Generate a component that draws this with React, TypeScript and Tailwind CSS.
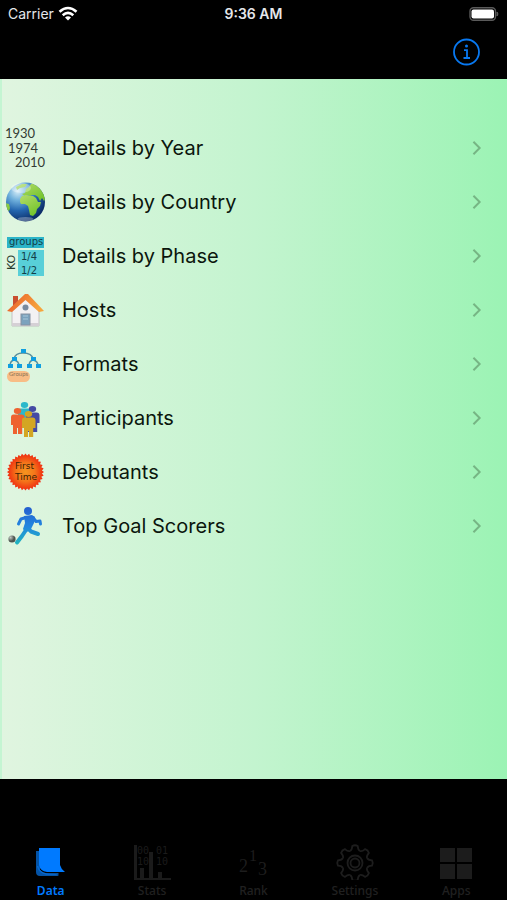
import type { ReactNode } from "react";

const YearIcon = () => (
  <svg viewBox="0 0 48 48" className="size-12" fontFamily="Lato, sans-serif" fontSize="13" fill="#333b33">
    <text x="5" y="14">1930</text>
    <text x="8" y="29">1974</text>
    <text x="15" y="43">2010</text>
  </svg>
);

const GlobeIcon = () => (
  <svg viewBox="0 0 48 48" className="size-12">
    <defs>
      <radialGradient id="sea" cx="0.3" cy="0.22" r="0.8">
        <stop offset="0" stopColor="#d8eef8" />
        <stop offset="0.3" stopColor="#6fb0dc" />
        <stop offset="0.62" stopColor="#2567b0" />
        <stop offset="1" stopColor="#0c2d68" />
      </radialGradient>
      <linearGradient id="land" x1="0" y1="0" x2="0.6" y2="1">
        <stop offset="0" stopColor="#b5dc6a" />
        <stop offset="1" stopColor="#73c42c" />
      </linearGradient>
      <clipPath id="ball">
        <circle cx="25.5" cy="24" r="19.5" />
      </clipPath>
    </defs>
    <circle cx="25.5" cy="24" r="19.5" fill="url(#sea)" />
    <g clipPath="url(#ball)" fill="url(#land)">
      <path d="M22 16l3-1 1-4 3-2 2-3 3-1 1-2 5 2 5 5 2 8-3 5-2-3-2 3-2-4-3-2-3 0-2 1-3-1-2 1z" />
      <path d="M20 21l2-3 4-1 4 1 3 0 3 2 2 4 3 0-1 4-3 3-1 4-3 3-3-1-1-5-1-4-3-2-4 0-1-2z" />
      <path d="M16 9l6-3 5 0-2 3-5 1-3 2zM5 25l4 1 1 4-1 3-4-2z" />
    </g>
    <ellipse cx="21" cy="10" rx="10" ry="5" fill="#fff" opacity="0.3" />
    <ellipse cx="25.5" cy="41" rx="8" ry="2" fill="#fff" opacity="0.3" />
  </svg>
);

const PhaseIcon = () => (
  <svg viewBox="0 0 48 48" className="size-12" fontFamily="'DejaVu Sans', sans-serif" fontSize="10" fill="#124048">
    <rect x="7" y="5" width="37" height="11" fill="#2cb4c8" />
    <rect x="18" y="18" width="26" height="26" fill="#58cfd8" />
    <text x="9" y="13">groups</text>
    <text x="21" y="28">1/4</text>
    <text x="21" y="42">1/2</text>
    <text transform="translate(15 38) rotate(-90)" fontSize="11" fill="#263a2c">KO</text>
  </svg>
);

const HouseIcon = () => (
  <svg viewBox="0 0 48 48" className="size-12">
    <defs>
      <linearGradient id="roof" x1="0" y1="0" x2="1" y2="0.3">
        <stop offset="0" stopColor="#e8582a" />
        <stop offset="1" stopColor="#f6a53c" />
      </linearGradient>
    </defs>
    <path d="M13 10h5v9l-5 4z" fill="#c94f30" />
    <path d="M12 25L26 12l13 13v15H12z" fill="#f3f1f3" stroke="#b9b5b9" strokeWidth="0.8" />
    <path d="M12 37h27v3H12z" fill="#d5d0d5" />
    <path d="M25 8L7 25l5 1 13.500-12L39 26l5-1L28 8z" fill="url(#roof)" />
    <circle cx="25.5" cy="21.5" r="3" fill="#788aa0" />
    <rect x="21" y="28" width="9" height="11" fill="#7ba2bd" stroke="#8792a2" />
    <path d="M23 30h5M23 33h5" stroke="#acc8da" />
  </svg>
);

const FormatsIcon = () => (
  <svg viewBox="0 0 48 48" className="size-12">
    <path d="M23 13Q15 13 14 19M23 13q9 0 10 6M14 20q-4 1-4 6M14 20q5 1 5 6M33 20q-4 1-4 6M33 20q5 1 5 6" fill="none" stroke="#5a8f9c" strokeWidth="1.5" />
    <g fill="#109fe0">
      <rect x="21" y="9" width="5" height="4" />
      <rect x="12" y="17" width="5" height="4" />
      <rect x="31" y="17" width="5" height="4" />
      <rect x="8" y="24" width="5" height="4" />
      <rect x="17" y="24" width="5" height="4" />
      <rect x="27" y="24" width="5" height="4" />
      <rect x="36" y="24" width="5" height="4" />
    </g>
    <rect x="7" y="31" width="23" height="11" rx="5.500" fill="#f8bd86" />
    <text x="9" y="36" fontSize="6" fontFamily="Lato, sans-serif" fill="#8b7355">Groups</text>
  </svg>
);

const Person = ({ x, y, color }: { x: number; y: number; color: string }) => (
  <g transform={`translate(${x} ${y})`} fill={color}>
    <ellipse cx="6.500" cy="3" rx="3.700" ry="3" />
    <path d="M2.500 6.500h8q3 0 3 3V17h-2.300v9H7v-6H6v6H2v-9H0V9.500q0-3 2.500-3z" />
  </g>
);

const ParticipantsIcon = () => (
  <svg viewBox="0 0 48 48" className="size-12">
    <Person x={18} y={8} color="#2bb8cb" />
    <Person x={26} y={12} color="#454ba4" />
    <Person x={11} y={14} color="#ee6230" />
    <Person x={22} y={17} color="#d3a623" />
  </svg>
);

// 32 teeth around the seal
const teeth = Array.from({ length: 64 }, (_, i) => {
  const r = i % 2 ? 16.5 : 18.5;
  const a = (i * Math.PI) / 32;
  return `${(25.5 + r * Math.cos(a)).toFixed(2)},${(24 + r * Math.sin(a)).toFixed(2)}`;
}).join(" ");

const DebutantsIcon = () => (
  <svg viewBox="0 0 48 48" className="size-12" fontFamily="'DejaVu Sans', sans-serif" fontSize="9" fill="#3b2105">
    <defs>
      <radialGradient id="seal">
        <stop offset="0" stopColor="#f4951f" />
        <stop offset="0.5" stopColor="#f4761a" />
        <stop offset="0.9" stopColor="#f03812" />
        <stop offset="1" stopColor="#f02a12" />
      </radialGradient>
    </defs>
    <polygon points={teeth} fill="url(#seal)" />
    <text x="15" y="21">First</text>
    <text x="15" y="32">Time</text>
  </svg>
);

const ScorerIcon = () => (
  <svg viewBox="0 0 48 48" className="size-12">
    <defs>
      <linearGradient id="runner" gradientUnits="userSpaceOnUse" x1="0" y1="6" x2="0" y2="43">
        <stop offset="0" stopColor="#2460cf" />
        <stop offset="0.5" stopColor="#2387df" />
        <stop offset="1" stopColor="#20b8bc" />
      </linearGradient>
      <radialGradient id="football" cx="0.3" cy="0.3">
        <stop offset="0" stopColor="#c3c9c3" />
        <stop offset="1" stopColor="#4d554f" />
      </radialGradient>
    </defs>
    <circle cx="28" cy="9" r="4" fill="url(#runner)" />
    <path d="M24 14l8-1 3 2-1 6-4 8-5 1-2-3 2-6z" fill="url(#runner)" />
    <g fill="none" stroke="url(#runner)" strokeLinecap="round" strokeLinejoin="round">
      <path d="M26 15.500l-5 1.500-2.500 5M33 15.500l3 4 4-.5.5 3" strokeWidth="3" />
      <path d="M28 26l3 3.500 7 2.500M26 28l-4 6-5 6.500" strokeWidth="4" />
    </g>
    <circle cx="12" cy="37" r="3.600" fill="url(#football)" />
  </svg>
);

const rows: { label: string; icon: ReactNode }[] = [
  { label: "Details by Year", icon: <YearIcon /> },
  { label: "Details by Country", icon: <GlobeIcon /> },
  { label: "Details by Phase", icon: <PhaseIcon /> },
  { label: "Hosts", icon: <HouseIcon /> },
  { label: "Formats", icon: <FormatsIcon /> },
  { label: "Participants", icon: <ParticipantsIcon /> },
  { label: "Debutants", icon: <DebutantsIcon /> },
  { label: "Top Goal Scorers", icon: <ScorerIcon /> },
];

const DataIcon = () => (
  <svg viewBox="0 0 40 40" className="size-10">
    <path d="M5 11h4v20q4 3 16 3l3 2H9q-4 0-4-4z" fill="#0453a6" />
    <path d="M8 8h21v17q1 4 5 7H16q-7-1-8-7z" fill="#007aff" />
    <path d="M6.500 26q2 7 9 8h12" fill="none" stroke="#0668cf" strokeWidth="1.500" />
  </svg>
);

const StatsIcon = () => (
  <svg viewBox="0 0 40 40" className="size-10" fill="#1b1b1b">
    <path d="M2 5h3v33h34v3H2zM17 12h4v28h-4zM8 28h4v10H8zM26 32h4v6h-4z" />
    <g fontFamily="'DejaVu Sans Mono', monospace" fontSize="10">
      <text x="5" y="14">00</text>
      <text x="24" y="14">01</text>
      <text x="5" y="25">10</text>
      <text x="24" y="25">10</text>
    </g>
  </svg>
);

const RankIcon = () => (
  <svg viewBox="0 0 40 40" className="size-10" fill="#1d1d1d" fontFamily="'Liberation Serif', serif" fontSize="18">
    <text x="6" y="32">2</text>
    <text x="16" y="21" fontSize="16">1</text>
    <text x="25" y="35">3</text>
  </svg>
);

const gear = Array.from({ length: 8 }, (_, i) => i * 45);

const SettingsIcon = () => (
  <svg viewBox="0 0 40 40" className="size-10" fill="none" stroke="#1d1d1d" strokeWidth="1.800">
    {gear.map((a) => (
      <path key={a} d="M15 11Q17 10 17.300 6q2.700-1.500 5.400 0Q23 10 25 11" transform={`rotate(${a} 20 23)`} />
    ))}
    <circle cx="20" cy="23" r="7.500" />
    <circle cx="20" cy="23" r="4.500" />
  </svg>
);

const AppsIcon = () => (
  <svg viewBox="0 0 40 40" className="size-10" fill="#1c1c1c">
    <path d="M4 8h15v14H4zM21 8h15v14H21zM4 24h15v15H4zM21 24h15v15H21z" />
  </svg>
);

const tabs: { label: string; icon: ReactNode }[] = [
  { label: "Data", icon: <DataIcon /> },
  { label: "Stats", icon: <StatsIcon /> },
  { label: "Rank", icon: <RankIcon /> },
  { label: "Settings", icon: <SettingsIcon /> },
  { label: "Apps", icon: <AppsIcon /> },
];

const App = () => {
  return (
    <div className="flex min-h-screen w-full flex-col bg-black font-['Inter',sans-serif]">
      <header className="flex flex-col pb-[11px]">
        <div className="grid h-7 grid-cols-3 items-center px-2 text-sm leading-7 text-gray-200">
          <div className="flex items-center gap-1">
            <span>Carrier</span>
            <svg viewBox="0 0 20 16" className="h-4 w-5" fill="none" stroke="#fff" strokeWidth="2.600">
              <path d="M1.500 5.800q8.500-7.600 17 0M4.700 9.200q5.300-4.800 10.600 0" />
              <path d="M10 14.500L7 11.500q3-2.600 6 0z" fill="#fff" stroke="none" />
            </svg>
          </div>
          <span className="text-center font-semibold">9:36 AM</span>
          <svg viewBox="0 0 30 14" className="h-3.5 w-[30px] justify-self-end">
            <rect x="1" y="0.800" width="25.500" height="12.400" rx="3.500" fill="none" stroke="#5a5a5a" strokeWidth="1.400" />
            <rect x="2.500" y="2.500" width="22.500" height="9" rx="2" fill="#fff" />
            <path d="M28 5q2 2 0 4z" fill="#5a5a5a" stroke="#5a5a5a" />
          </svg>
        </div>
        <div className="flex justify-end px-6 pt-2">
          <button aria-label="Info" className="size-8">
            <svg viewBox="0 0 32 32" className="size-8" fill="none" stroke="#0878f0" strokeWidth="1.800">
              <circle cx="15.500" cy="16" r="12.500" />
              <path d="M13 14.200h3v7.500M12.500 22h6.500" />
              <circle cx="15.500" cy="10" r="1.500" fill="#0878f0" stroke="none" />
            </svg>
          </button>
        </div>
      </header>

      <main className="flex-1 border-l-2 border-[#c4f5d2] bg-linear-to-r from-[#e0f5e0] via-[#c3f4cf] to-[#9bf3b4] pt-[42px]">
        <ul>
          {rows.map(({ label, icon }) => (
            <li key={label}>
              <a href="#" className="flex h-[54px] items-center pr-6 text-xl text-[#0b160d]">
                <span className="-ml-0.5 shrink-0">{icon}</span>
                <span className="flex-1 pl-3.5">{label}</span>
                <svg viewBox="0 0 12 18" className="h-4 w-3" fill="none" stroke="#76b584" strokeWidth="2.200">
                  <path d="M2 2l7 7-7 7" />
                </svg>
              </a>
            </li>
          ))}
        </ul>
      </main>

      <nav className="grid grid-cols-5 pt-[61px] font-['Noto_Sans',sans-serif]">
        {tabs.map(({ label, icon }, i) => (
          <button
            key={label}
            className={`flex flex-col items-center gap-0.5 text-xs leading-[18px] ${i === 0 ? "font-semibold text-[#007aff]" : "font-medium text-[#202020]"}`}
          >
            {icon}
            {label}
          </button>
        ))}
      </nav>
    </div>
  );
};

export default App;
